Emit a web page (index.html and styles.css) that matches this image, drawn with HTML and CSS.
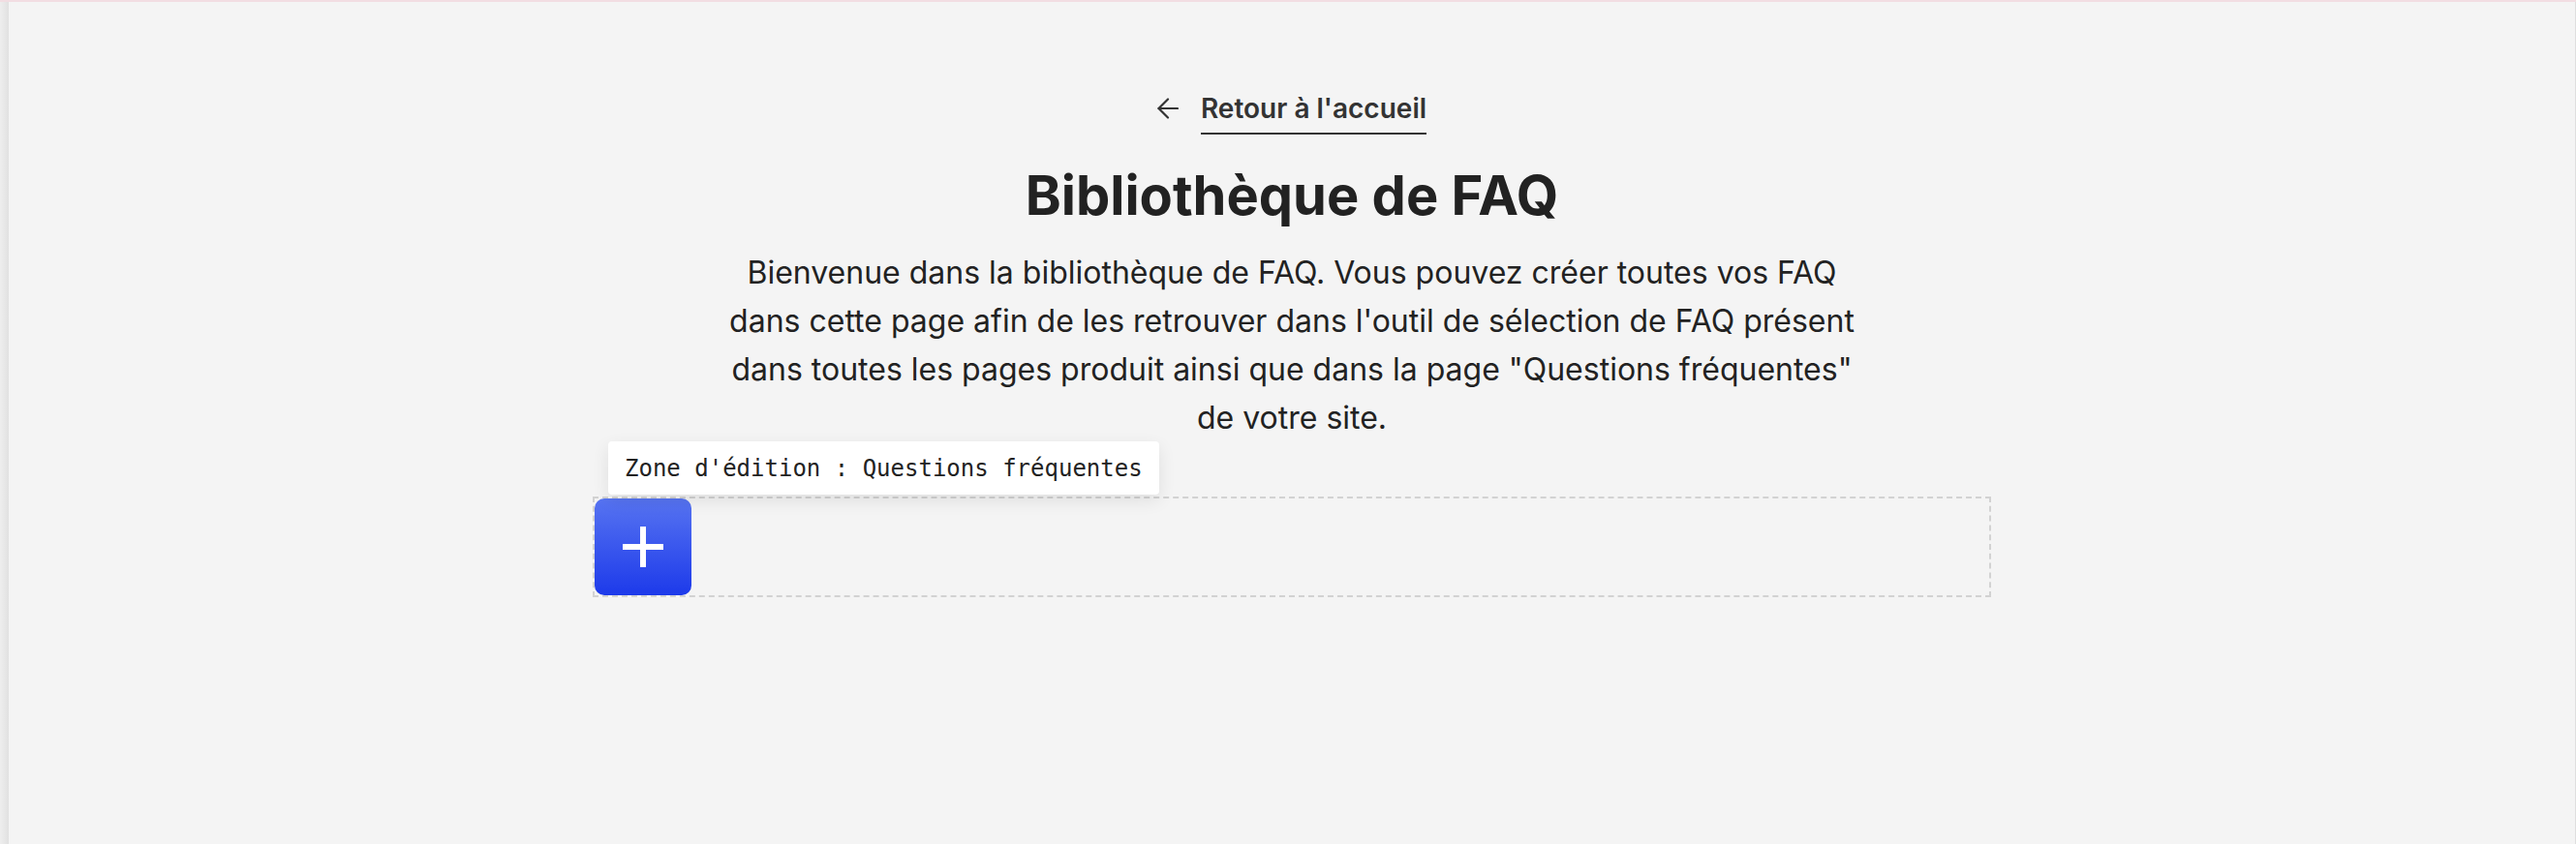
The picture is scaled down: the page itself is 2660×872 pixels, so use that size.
FILE: index.html
```html
<!DOCTYPE html>
<html lang="fr">
<head>
  <meta charset="UTF-8">
  <meta name="viewport" content="width=device-width, initial-scale=1.0">
  <title>Bibliothèque de FAQ</title>
  <link rel="stylesheet" href="styles.css">
</head>
<body>
  <div class="frame">
    <div class="edge"></div>
    <main class="page">
      <div class="back-row">
        <a href="#" class="back">
          <svg class="back-icon" width="22" height="22" viewBox="0 0 22 22" fill="none" stroke="#333" stroke-width="2.2" stroke-linecap="round" stroke-linejoin="round">
            <path d="M21 11H1.5"/>
            <path d="M11 1.5 1.5 11l9.5 9.5"/>
          </svg>
          <span class="back-text">Retour à l'accueil</span>
        </a>
      </div>
      <h1 class="title">Bibliothèque de FAQ</h1>
      <p class="intro">Bienvenue dans la bibliothèque de FAQ. Vous pouvez créer toutes vos FAQ dans cette page afin de les retrouver dans l'outil de sélection de FAQ présent dans toutes les pages produit ainsi que dans la page "Questions fréquentes" de votre site.</p>
      <div class="zone">
        <div class="zone-label">Zone d'édition : Questions fréquentes</div>
        <button class="add-btn" type="button" aria-label="Ajouter">
          <svg width="42" height="42" viewBox="0 0 42 42" fill="none" stroke="#fff" stroke-width="6">
            <path d="M21 0v42M0 21h42"/>
          </svg>
        </button>
      </div>
    </main>
  </div>
</body>
</html>
```

FILE: styles.css
```css
html, body { margin: 0; padding: 0; height: 100%; }
body { background: #f4f4f4; font-family: Inter, "Noto Sans", sans-serif; color: #222; border-top: 2px solid #f2dde2; box-sizing: border-box; }

.frame { display: flex; min-height: 100%; }
.edge { width: 9px; flex-shrink: 0; background: linear-gradient(to right, #eeeeee, #e1e1e1); }
.page { flex: 1; border-right: 1px solid #dedede; padding-top: 94px; text-align: center; }

.back-row { display: flex; justify-content: center; }
.back { display: inline-flex; align-items: flex-start; gap: 23px; color: #333; text-decoration: none; }
.back-icon { margin-top: 5px; display: block; }
.back-text { font-size: 28px; font-weight: 600; line-height: 32px; padding-bottom: 9px; border-bottom: 2px solid #333; }

.title { margin: 28px 0 0; font-size: 56px; font-weight: 700; line-height: 70px; color: #222; }

.intro { max-width: 1180px; margin: 20px auto 0; font-size: 32px; line-height: 50px; color: #222; }

.zone { position: relative; width: 1444px; height: 104px; margin: 56px auto 0; border: 2px dashed #d2d2d2; box-sizing: border-box; text-align: left; }
.zone-label { position: absolute; left: 14px; bottom: calc(100% + 4px); padding: 14px 17px 13px; background: #fff; border-radius: 4px; box-shadow: 0 6px 18px rgba(0, 0, 0, 0.09); font-family: "DejaVu Sans Mono", monospace; font-size: 24px; line-height: 28px; color: #222; white-space: nowrap; }
.add-btn { display: flex; align-items: center; justify-content: center; width: 100px; height: 100px; padding: 0; border: 0; border-radius: 10px; background: linear-gradient(to bottom, #5774f1, #1d3aea); cursor: pointer; }
```
